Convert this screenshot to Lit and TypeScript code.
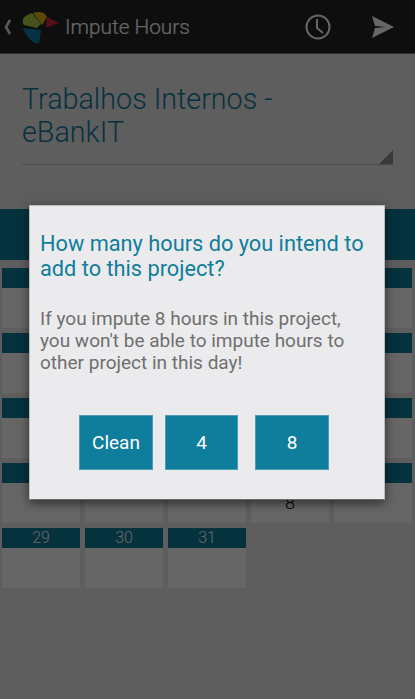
import { LitElement, html, css, svg } from "lit";
import { customElement } from "lit/decorators.js";

const ROWS: (string | number)[][] = [
  ["", "", "", "", ""],
  ["", "", "", "", ""],
  ["", "", "", "", ""],
  ["", "", "", "", ""],
  [29, 30, 31],
];

@customElement("app-root")
export class AppRoot extends LitElement {
  static styles = css`
    :host { display: block; position: relative; width: 415px; height: 699px; overflow: hidden; background: #ebebed; font-family: Roboto, "Liberation Sans", sans-serif; }
    .bar { display: flex; align-items: center; height: 53px; background: #232323; border-bottom: 1px solid #7a7a7a; color: #fff; }
    .chev { margin-left: 3px; width: 10px; height: 18px; }
    .logo { margin: 3px 0 0 9px; width: 38px; height: 32px; flex: none; }
    .title { margin-left: 5px; font-size: 20.8px; font-weight: 300; flex: 1; white-space: nowrap; -webkit-text-stroke: 0.2px #fff; }
    .clock { width: 28px; height: 28px; margin-right: 37px; }
    .send { width: 26px; height: 26px; margin-right: 20px; }
    .spin { margin: 29px 22px 0; height: 81px; position: relative; border-bottom: 1px solid #bcbcbc; font-size: 28.7px; font-weight: 300; line-height: 33px; color: #0f7d9c; }
    .spin span { display: block; width: 300px; }
    .tri { position: absolute; right: 0; bottom: 0; width: 0; height: 0; border-style: solid; border-width: 0 0 14px 14px; border-color: transparent transparent #8f8f8f transparent; }
    .band { height: 51px; margin-top: 44px; background: #0f7d9c; }
    .grid { display: grid; grid-template-columns: repeat(5, 78px); gap: 5px; padding: 8px 0 0 2px; }
    .cell { height: 60px; background: #fff; display: flex; flex-direction: column; align-items: center; }
    .day { align-self: stretch; height: 20px; background: #0f7d9c; color: #fff; font-size: 16px; font-weight: 300; line-height: 20px; text-align: center; }
    .val { font-size: 18px; font-weight: 300; line-height: 20px; color: #000; margin-top: 10px; }
    .scrim { position: absolute; inset: 0; background: rgba(0,0,0,.6); display: flex; justify-content: flex-start; align-items: flex-start; padding: 205px 0 0 29px; }
    .dlg { width: 356px; height: 295px; box-sizing: border-box; background: #ebebed; box-shadow: 0 3px 10px rgba(0,0,0,.55); border: 1px solid #bdbdbd; border-bottom-color: #6a6a6a; padding: 25px 10px 0; }
    h2 { margin: 0; font-size: 21.75px; font-weight: 400; line-height: 25px; color: #0f7d9c; }
    p { margin: 27px 0 0; font-size: 19px; line-height: 22px; color: #6f6f6f; }
    .btns { display: flex; margin: 41px 0 0 39px; }
    button { all: unset; width: 74px; height: 55px; text-align: center; box-sizing: border-box; background: #0f7d9c; color: #fff; font: 400 19px Roboto, sans-serif; box-shadow: inset 0 0 0 1px #4d9db6; }
    .b2 { margin-left: 12px; width: 73px; }
    .b3 { margin-left: 17px; }
  `;

  render() {
    return html`
      <div class="bar">
        <svg class="chev" viewBox="0 0 10 18"><path d="M7 2 L3 9 L7 16" fill="none" stroke="#fff" stroke-width="2.6" opacity=".85"/></svg>
        <svg class="logo" viewBox="0 0 38 32">
          <path d="M1 7 Q2 4 10 1 L19 12 L15 16 L2 13 Q0 11 1 7 Z" fill="#b0cf48"/>
          <path d="M11 1 Q17 -1 22 1 L25 5 L20 13 Z" fill="#e6b414"/>
          <path d="M25 5 L37 11 Q30 14 24 15 Z" fill="#d92838"/>
          <path d="M1 16 L19 18 L17 31 Q15 32 11 30 Q4 24 1 16 Z" fill="#0f7db0"/>
        </svg>
        <span class="title">Impute Hours</span>
        ${svg`<svg class="clock" viewBox="0 0 28 28"><circle cx="14" cy="14" r="11.5" fill="none" stroke="#fff" stroke-width="2"/><path d="M13 6 V15 L19 20" fill="none" stroke="#fff" stroke-width="2"/></svg>`}
        ${svg`<svg class="send" viewBox="0 0 26 26"><path d="M3 2 L25 13 L3 24 L6 14 L17 13 L6 12 Z" fill="#fff"/></svg>`}
      </div>
      <div class="spin"><span>Trabalhos Internos - eBankIT</span><i class="tri"></i></div>
      <div class="band"></div>
      <div class="grid">
        ${ROWS.flatMap((row, r) => row.map((d, c) => html`
          <div class="cell">
            <div class="day">${d}</div>
            ${r === 3 && c === 3 ? html`<div class="val">8</div>` : ""}
          </div>`))}
      </div>
      <div class="scrim">
        <div class="dlg">
          <h2>How many hours do you intend to add to this project?</h2>
          <p>If you impute 8 hours in this project, you won't be able to impute hours to other project in this day!</p>
          <div class="btns">
            <button>Clean</button>
            <button class="b2">4</button>
            <button class="b3">8</button>
          </div>
        </div>
      </div>
    `;
  }
}
